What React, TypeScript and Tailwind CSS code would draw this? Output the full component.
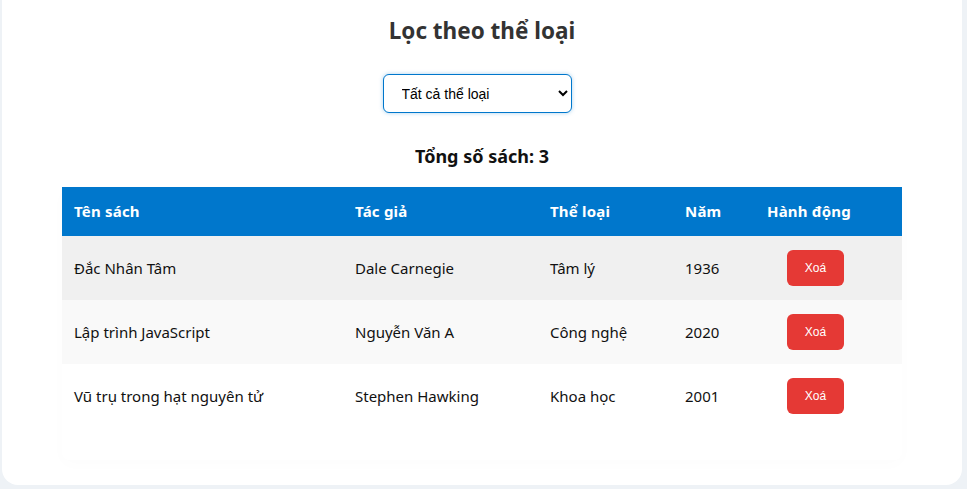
import React from 'react';

const books = [
	{ title: 'Đắc Nhân Tâm', author: 'Dale Carnegie', genre: 'Tâm lý', year: 1936 },
	{ title: 'Lập trình JavaScript', author: 'Nguyễn Văn A', genre: 'Công nghệ', year: 2020 },
	{ title: 'Vũ trụ trong hạt nguyên tử', author: 'Stephen Hawking', genre: 'Khoa học', year: 2001 }
];

const rowBg = ['bg-[#f0f0f0]', 'bg-[#f9f9f9]', 'bg-white'];

const App = () => {
	const [genre, setGenre] = React.useState('all');

	return (
		<div className="min-h-[489px] bg-[#eef2f6] pl-[2px] pr-[5px] pb-[3px] font-['Noto_Sans','Open_Sans',sans-serif]">
			<div className="bg-white rounded-b-2xl h-[485px] flex flex-col items-center">
				<h2 className="mt-[16px] text-[22.5px] leading-[30px] font-bold text-[#333]">Lọc theo thể loại</h2>

				<select
					value={genre}
					onChange={(e) => setGenre(e.target.value)}
					className="mt-[28px] mr-[10px] w-[189px] h-[39px] pl-[14px] pr-2 rounded-md border border-[#0077cc] bg-white text-[14px] text-black font-['Liberation_Sans',Arial,sans-serif] shadow-[0_0_4px_rgba(0,119,204,0.35)] outline-none"
				>
					<option value="all">Tất cả thể loại</option>
					<option value="tam-ly">Tâm lý</option>
					<option value="cong-nghe">Công nghệ</option>
					<option value="khoa-hoc">Khoa học</option>
				</select>

				<h3 className="mt-[30px] text-[18px] leading-[26px] font-bold text-[#111]">Tổng số sách: 3</h3>

				<div className="mt-[18px] w-[840px] shadow-[0_4px_16px_rgba(0,0,0,0.015)] rounded-lg pb-[32px]">
					<table className="w-full table-fixed border-collapse text-left">
						<colgroup>
							<col className="w-[281px]" />
							<col className="w-[195px]" />
							<col className="w-[135px]" />
							<col className="w-[82px]" />
							<col className="w-[147px]" />
						</colgroup>
						<thead>
							<tr className="bg-[#0077cc] h-[49px] text-white text-[15px] font-bold tracking-[0.2px]">
								<th className="px-3">Tên sách</th>
								<th className="px-3">Tác giả</th>
								<th className="px-3">Thể loại</th>
								<th className="px-3">Năm</th>
								<th className="px-3">Hành động</th>
							</tr>
						</thead>
						<tbody>
							{books.map((b, i) => (
								<tr key={i} className={`${rowBg[i]} h-[64px] text-[15px] text-[#111]`}>
									<td className="px-3">{b.title}</td>
									<td className="px-3">{b.author}</td>
									<td className="px-3">{b.genre}</td>
									<td className="px-3">{b.year}</td>
									<td className="pl-[32px]">
										<button className="w-[57px] h-[36px] rounded-md bg-[#e53935] text-white text-[12px] font-['Liberation_Sans',Arial,sans-serif]">
											Xoá
										</button>
									</td>
								</tr>
							))}
						</tbody>
					</table>
				</div>
			</div>
		</div>
	);
};

export default App;
